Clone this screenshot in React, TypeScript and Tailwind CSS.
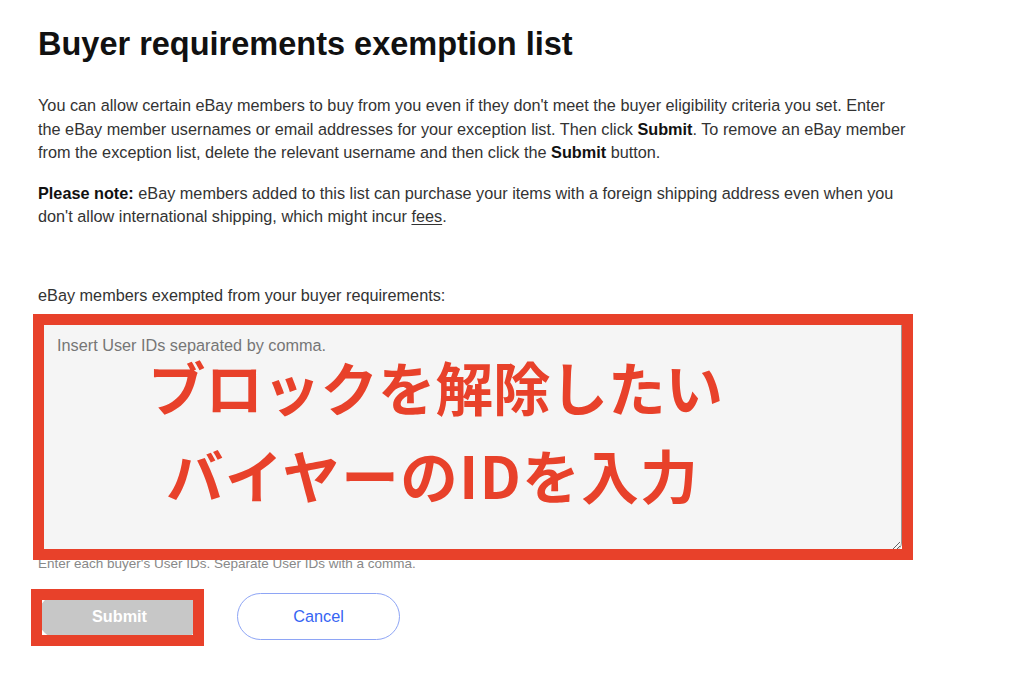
import React from "react";

export default function App() {
  return (
    <div className="relative w-[1024px] h-[683px] overflow-hidden bg-white font-['Liberation_Sans',Arial,sans-serif] text-[#333]">
      <div className="pl-[38px] pt-[25px]">
        <h1 className="text-[32.5px] leading-[38px] font-bold text-[#111]">
          Buyer requirements exemption list
        </h1>
        <p className="mt-[31px] text-[16.25px] leading-[23.5px] w-[920px]">
          You can allow certain eBay members to buy from you even if they don't meet the buyer eligibility criteria you set. Enter
          <br />
          the eBay member usernames or email addresses for your exception list. Then click <b className="text-[#111]">Submit</b>. To remove an eBay member
          <br />
          from the exception list, delete the relevant username and then click the <b className="text-[#111]">Submit</b> button.
        </p>
        <p className="mt-[17px] text-[16.25px] leading-[23.5px] w-[920px]">
          <b className="text-[#111]">Please note:</b> eBay members added to this list can purchase your items with a foreign shipping address even when you
          <br />
          don't allow international shipping, which might incur <span className="underline underline-offset-2">fees</span>.
        </p>
        <label className="block mt-[55px] text-[16.25px] leading-[23.5px]">
          eBay members exempted from your buyer requirements:
        </label>
        <div className="relative mt-[11px] w-[864px] h-[233px]">
          <textarea
            placeholder="Insert User IDs separated by comma."
            className="block w-full h-full bg-[#f5f5f5] border border-[#999] rounded-[8px] pl-[18px] pt-[15px] text-[16.25px] leading-[23px] placeholder:text-[#767676] outline-none"
          />
          <div className="pointer-events-none absolute left-[110px] top-[40px] text-[57.5px] leading-[57px] font-bold text-[#e8412a] font-['Noto_Sans_CJK_JP',sans-serif] whitespace-nowrap">
            ブロックを解除したい
          </div>
          <div className="pointer-events-none absolute left-[128px] top-[128px] text-[57.5px] leading-[57px] font-bold tracking-[1.5px] text-[#e8412a] font-['Noto_Sans_CJK_JP',sans-serif] whitespace-nowrap">
            バイヤーのIDを入力
          </div>
        </div>
        <div className="mt-[5px] text-[13.5px] leading-[16px] text-[#888]">
          Enter each buyer's User IDs. Separate User IDs with a comma.
        </div>
        <div className="mt-[21px] flex gap-[36px]">
          <button className="w-[163px] h-[47px] rounded-full bg-[#c7c7c7] text-white font-bold text-[16.25px]">
            Submit
          </button>
          <button className="w-[163px] h-[47px] rounded-full border border-[#8ea5f5] bg-white text-[#3665f3] text-[16.25px]">
            Cancel
          </button>
        </div>
      </div>

      <div className="pointer-events-none absolute left-[33px] top-[314px] w-[880px] h-[246px] border-[11px] border-[#e8412a]" />
      <div className="pointer-events-none absolute left-[31px] top-[589px] w-[173px] h-[57px] border-[11px] border-[#e8412a]" />
    </div>
  );
}
